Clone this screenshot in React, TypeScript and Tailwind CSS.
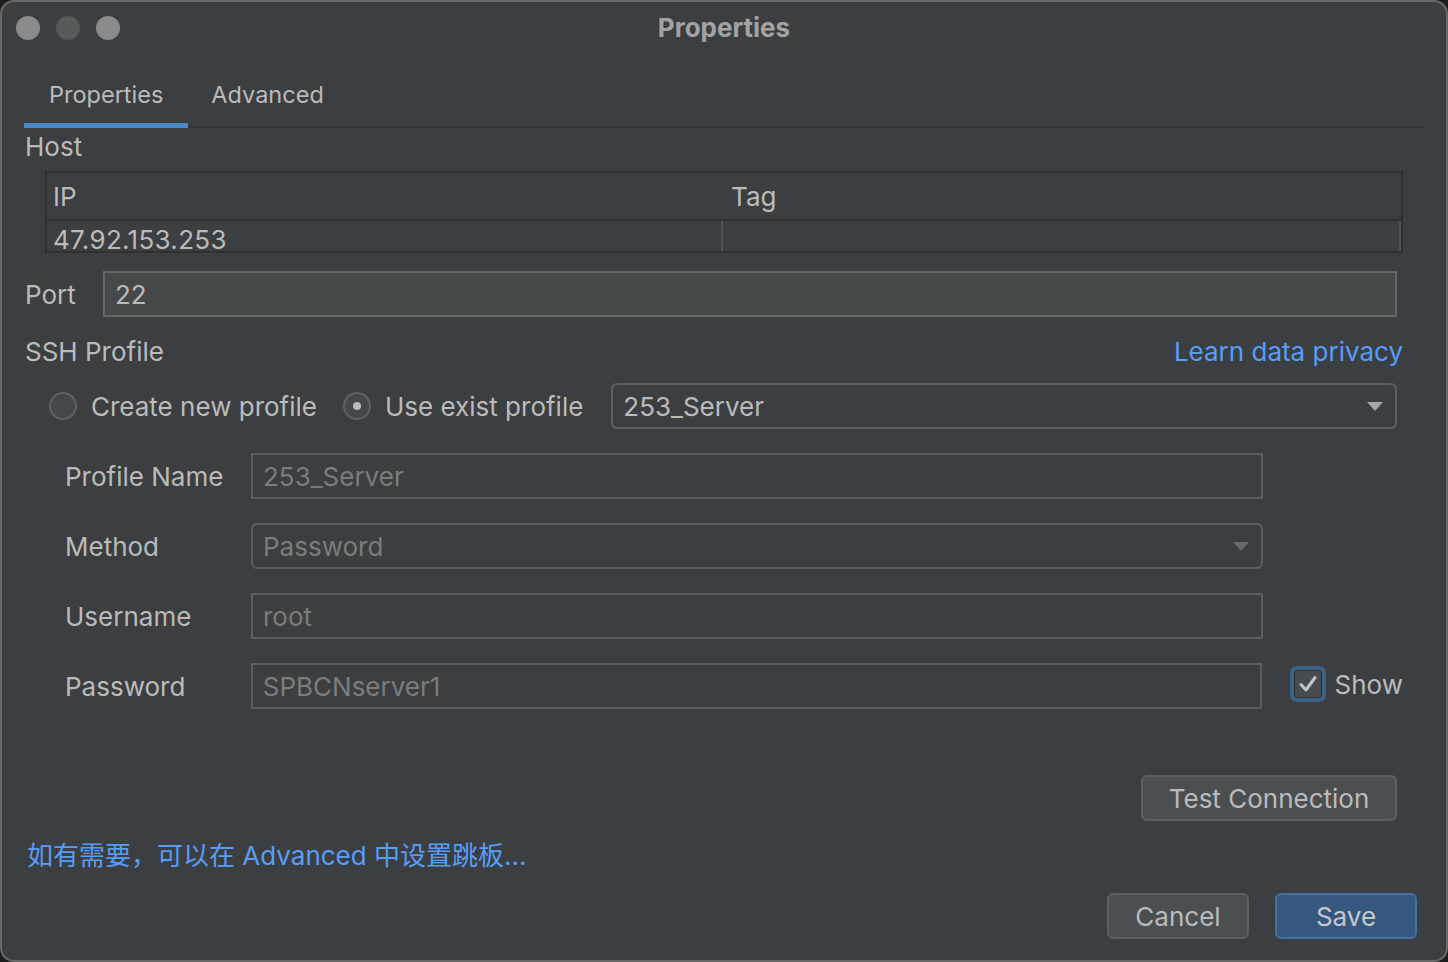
import React from "react";

const FONT = "font-['Inter','Noto_Sans_CJK_SC',sans-serif]";

function Radio({ checked }: { checked?: boolean }) {
  return (
    <div className="w-[28px] h-[28px] rounded-full border-2 border-[#5e6163] bg-[#43484a] flex items-center justify-center shrink-0">
      {checked && <div className="w-[8px] h-[8px] rounded-full bg-[#bbbbbb]" />}
    </div>
  );
}

function Triangle({ color }: { color: string }) {
  return (
    <svg width="16" height="9" viewBox="0 0 16 9">
      <path d="M0 0 L16 0 L8 9 Z" fill={color} />
    </svg>
  );
}

function Field({ label, value, rounded, dropdown, extra }: { label: string; value: string; rounded?: boolean; dropdown?: boolean; extra?: React.ReactNode }) {
  return (
    <div className="flex items-center h-[46px]">
      <div className="w-[186px] text-[26px] text-[#bbbbbb]">{label}</div>
      <div
        className={`w-[1012px] h-[46px] border-2 border-[#5b5e60] flex items-center justify-between pl-[10px] pr-[12px] text-[26px] text-[#7a7d7f] ${rounded ? "rounded-[6px]" : ""}`}
      >
        <span>{value}</span>
        {dropdown && <Triangle color="#686b6d" />}
      </div>
      {extra}
    </div>
  );
}

export default function App() {
  return (
    <div className={`w-[1448px] h-[962px] bg-[#1c1c1c] ${FONT} antialiased`}>
      <div className="w-full h-full rounded-[14px] border-2 border-[#66686a] bg-[#3c3f41] flex flex-col overflow-hidden">
        {/* Title bar */}
        <div className="h-[54px] grid grid-cols-[1fr_auto_1fr] items-center shrink-0">
          <div className="flex items-center gap-[16px] pl-[14px] -mt-[3px]">
            <div className="w-[24px] h-[24px] rounded-full bg-[#8a8b8c]" />
            <div className="w-[24px] h-[24px] rounded-full bg-[#56595a]" />
            <div className="w-[24px] h-[24px] rounded-full bg-[#8a8b8c]" />
          </div>
          <div className="text-[26px] font-bold text-[#a3a3a3] -mt-[3px]">Properties</div>
          <div />
        </div>

        {/* Tabs */}
        <div className="mx-[22px] h-[72px] flex border-b-2 border-[#333537] shrink-0">
          <div className="relative px-[25px] flex items-center text-[23.5px] text-[#bbbbbb] pt-[8px]">
            Properties
            <div className="absolute left-0 right-0 -bottom-[2px] h-[5px] bg-[#4a88c7]" />
          </div>
          <div className="px-[23px] flex items-center text-[23.5px] text-[#bbbbbb] pt-[8px]">Advanced</div>
        </div>

        {/* Content */}
        <div className="flex flex-col pl-[23px] pr-[43px] flex-1">
          <div className="h-[32px] mt-[2px] flex items-center text-[26px] text-[#bbbbbb]">Host</div>

          {/* Table */}
          <div className="ml-[20px] mt-[9px] border-2 border-[#2e3031] flex flex-col">
            <div className="h-[48px] flex items-center text-[26px] text-[#bbbbbb] border-b-2 border-[#2e3031]">
              <div className="w-[676px] pl-[6px]">IP</div>
              <div className="pl-[8px]">Tag</div>
            </div>
            <div className="h-[30px] flex text-[26px] text-[#bbbbbb]">
              <div className="w-[676px] pl-[6px] border-r-2 border-[#4e5254] leading-[38px] tracking-[0.3px]">47.92.153.253</div>
              <div className="flex-1 border-r-2 border-[#4e5254]" />
            </div>
          </div>

          {/* Port */}
          <div className="mt-[18px] flex items-center h-[46px]">
            <div className="w-[78px] text-[26px] text-[#bbbbbb]">Port</div>
            <div className="flex-1 mr-[6px] h-[46px] bg-[#45494a] border-2 border-[#646668] flex items-center pl-[10px] text-[26px] text-[#bbbbbb]">
              22
            </div>
          </div>

          {/* SSH Profile */}
          <div className="mt-[19px] h-[30px] flex items-center justify-between text-[26px]">
            <span className="text-[#bbbbbb]">SSH Profile</span>
            <span className="text-[#589df6]">Learn data privacy</span>
          </div>

          <div className="mt-[17px] h-[46px] flex items-center pl-[24px] text-[26px] text-[#bbbbbb]">
            <Radio />
            <span className="ml-[14px]">Create new profile</span>
            <div className="ml-[26px]"><Radio checked /></div>
            <span className="ml-[14px]">Use exist profile</span>
            <div className="ml-[28px] flex-1 mr-[6px] h-[46px] rounded-[6px] border-2 border-[#5e6163] flex items-center justify-between pl-[10px] pr-[12px]">
              <span>253_Server</span>
              <Triangle color="#a5a7a9" />
            </div>
          </div>

          {/* Profile fields */}
          <div className="mt-[24px] pl-[40px] flex flex-col gap-[24px]">
            <Field label="Profile Name" value="253_Server" />
            <Field label="Method" value="Password" rounded dropdown />
            <Field label="Username" value="root" />
            <Field
              label="Password"
              value="SPBCNserver1"
              extra={
                <div className="ml-[28px] flex items-center gap-[9px] -mt-[4px]">
                  <div className="w-[36px] h-[36px] rounded-[7px] bg-[#3d6185] p-[4px]">
                    <div className="w-full h-full rounded-[3px] bg-[#474c4e] border border-[#2f3234] flex items-center justify-center">
                      <svg width="20" height="18" viewBox="0 0 20 18">
                        <path d="M3 9.5 L8 15 L17 2.5" fill="none" stroke="#c4c4c4" strokeWidth="3" strokeLinecap="round" strokeLinejoin="round" />
                      </svg>
                    </div>
                  </div>
                  <span className="text-[26px] text-[#bbbbbb]">Show</span>
                </div>
              }
            />
          </div>

          {/* Test connection */}
          <div className="mt-[66px] flex justify-end pr-[6px]">
            <div className="w-[256px] h-[46px] rounded-[6px] bg-[#4b4f51] border-2 border-[#5d6062] flex items-center justify-center text-[26px] text-[#bbbbbb]">
              Test Connection
            </div>
          </div>

          <div className="mt-[18px] h-[32px] flex items-center pl-[2px] text-[26px] text-[#589df6]">
            如有需要，可以在 Advanced 中设置跳板...
          </div>
        </div>

        {/* Footer */}
        <div className="flex justify-end gap-[26px] pr-[29px] pb-[21px]">
          <div className="w-[142px] h-[46px] rounded-[6px] bg-[#4b4f51] border-2 border-[#5d6062] flex items-center justify-center text-[26px] text-[#bbbbbb]">
            Cancel
          </div>
          <div className="w-[142px] h-[46px] rounded-[6px] bg-[#365880] border-2 border-[#4670a0] flex items-center justify-center text-[26px] text-[#c8c8c8]">
            Save
          </div>
        </div>
      </div>
    </div>
  );
}
